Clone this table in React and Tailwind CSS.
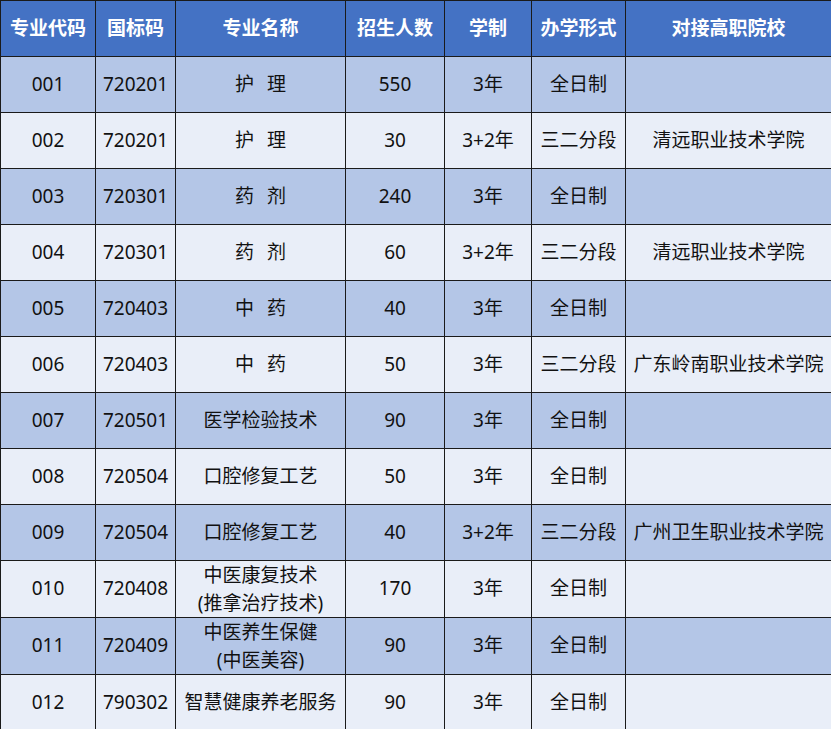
const COLS = [95, 80, 170, 99, 87, 94, 206];
const HEAD = ["专业代码", "国标码", "专业名称", "招生人数", "学制", "办学形式", "对接高职院校"];

const ROWS = [
  ["001", "720201", ["护", "理"], "550", "3年", "全日制", ""],
  ["002", "720201", ["护", "理"], "30", "3+2年", "三二分段", "清远职业技术学院"],
  ["003", "720301", ["药", "剂"], "240", "3年", "全日制", ""],
  ["004", "720301", ["药", "剂"], "60", "3+2年", "三二分段", "清远职业技术学院"],
  ["005", "720403", ["中", "药"], "40", "3年", "全日制", ""],
  ["006", "720403", ["中", "药"], "50", "3年", "三二分段", "广东岭南职业技术学院"],
  ["007", "720501", "医学检验技术", "90", "3年", "全日制", ""],
  ["008", "720504", "口腔修复工艺", "50", "3年", "全日制", ""],
  ["009", "720504", "口腔修复工艺", "40", "3+2年", "三二分段", "广州卫生职业技术学院"],
  ["010", "720408", "中医康复技术\n(推拿治疗技术)", "170", "3年", "全日制", ""],
  ["011", "720409", "中医养生保健\n(中医美容)", "90", "3年", "全日制", ""],
  ["012", "790302", "智慧健康养老服务", "90", "3年", "全日制", ""],
];

function Cell({ value }) {
  if (Array.isArray(value)) {
    return (
      <span className="inline-flex gap-[13px]">
        <span>{value[0]}</span>
        <span>{value[1]}</span>
      </span>
    );
  }
  if (value.includes("\n")) {
    return value.split("\n").map((l) => (
      <div key={l} className="leading-[28px]">{l}</div>
    ));
  }
  return value;
}

export default function App() {
  return (
    <div className="w-[831px] h-[729px] bg-white" style={{ fontFamily: '"Noto Sans", "Noto Sans CJK SC", sans-serif' }}>
      <table className="border-collapse table-fixed w-[831px] text-[19px] text-[#111]">
        <colgroup>
          {COLS.map((w, i) => (
            <col key={i} style={{ width: w }} />
          ))}
        </colgroup>
        <thead>
          <tr className="h-[56px] bg-[#4472c4]">
            {HEAD.map((h) => (
              <th key={h} className="border border-[#1a1a1a] text-white font-bold text-center p-0">
                {h}
              </th>
            ))}
          </tr>
        </thead>
        <tbody>
          {ROWS.map((r, i) => (
            <tr key={r[0]} className={`h-[56px] ${i % 2 === 0 ? "bg-[#b4c6e7]" : "bg-[#e9eef8]"}`}>
              {r.map((c, j) => (
                <td key={j} className="border border-[#1a1a1a] text-center p-0 whitespace-nowrap leading-tight">
                  <Cell value={c} />
                </td>
              ))}
            </tr>
          ))}
        </tbody>
      </table>
    </div>
  );
}
